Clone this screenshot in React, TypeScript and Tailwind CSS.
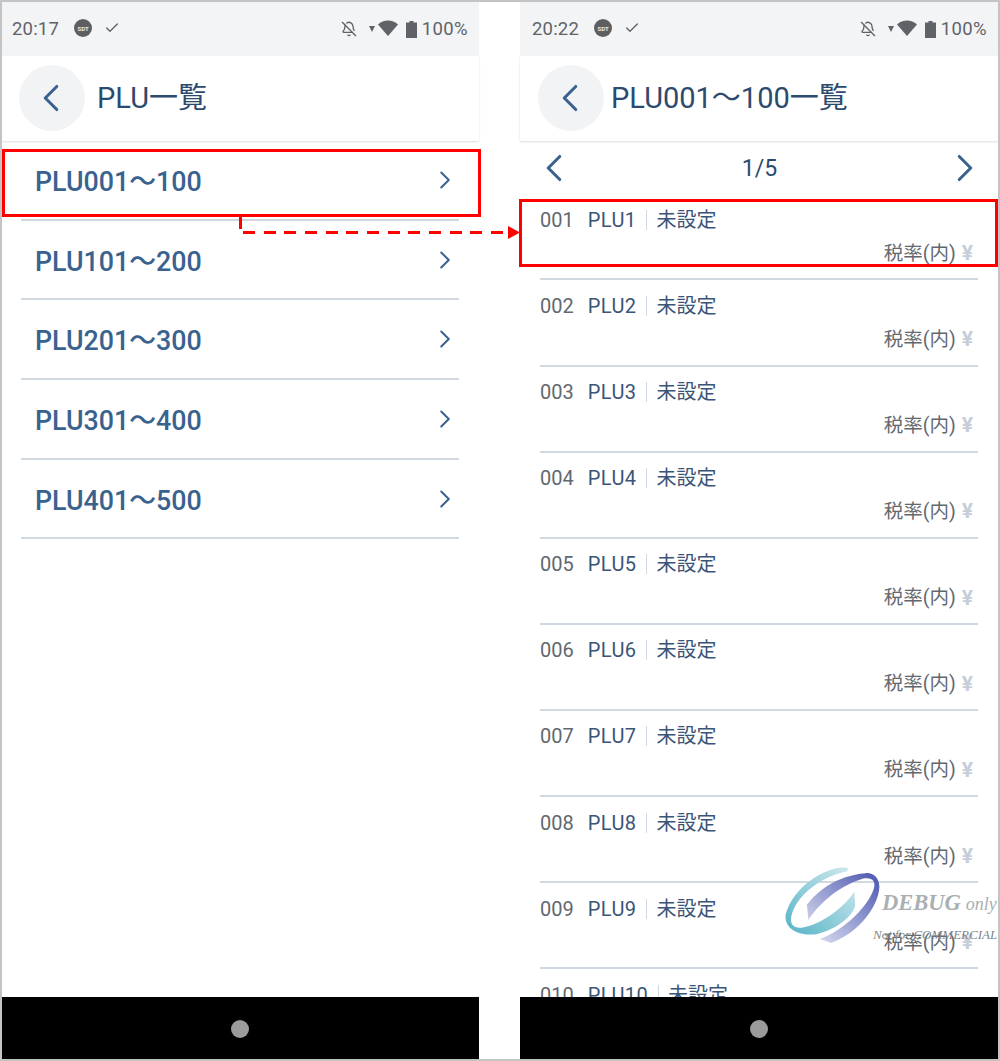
import { BellOff, Check, ChevronLeft, ChevronRight } from "lucide-react";

const FONT = "font-['Roboto','Noto_Sans_CJK_JP',sans-serif]";

function StatusBar({ time, pad }: { time: string; pad: string }) {
  return (
    <div className={`h-[54px] shrink-0 bg-[#f3f4f6] flex items-center pr-[11px] text-[#5f6368] ${pad}`}>
      <span className="text-[18.5px] leading-none tracking-[0.2px]">{time}</span>
      <span className="ml-[15px] w-[18px] h-[18px] rounded-full bg-[#5f5f5f] text-[#e8e8e8] text-[6px] font-bold flex items-center justify-center -mt-[2px]">SDT</span>
      <Check className="ml-[12px] w-[16px] h-[16px] -mt-[2px]" strokeWidth={2} />
      <BellOff className="ml-auto w-[16px] h-[16px]" strokeWidth={2} />
      <svg className="ml-[12px] w-[6px] h-[6px]" viewBox="0 0 6 6"><path d="M0 0h6L3 6z" fill="#5f6368" /></svg>
      <svg className="ml-[3px] w-[20px] h-[16px] -mt-[2px]" viewBox="0 0 20 16"><path d="M0 4.500C5.500 -1 14.500 -1 20 4.500L10 16z" fill="#5f6368" /></svg>
      <svg className="ml-[8px] w-[11px] h-[17px]" viewBox="0 0 11 17"><path d="M3.500 0h4v1.500H11V17H0V1.500h3.500z" fill="#5f6368" /></svg>
      <span className="ml-[5px] text-[18.5px] leading-none tracking-[0.4px]">100%</span>
    </div>
  );
}

function Header({ title, gap, left }: { title: string; gap: string; left: string }) {
  return (
    <div className={`h-[85px] shrink-0 flex items-center pb-[1px] shadow-[0_1px_2px_rgba(0,0,0,0.14)] ${left} ${gap}`}>
      <div className="w-[66px] h-[66px] rounded-full bg-[#f1f3f5] flex items-center justify-center">
        <ChevronLeft className="w-[46px] h-[46px] text-[#3a628f] -ml-[2px]" strokeWidth={1.6} />
      </div>
      <span className="text-[29px] leading-none text-[#2c4a6e] pt-[1px]">{title}</span>
    </div>
  );
}

function NavBar({ shift }: { shift: string }) {
  return (
    <div className={`h-[62px] shrink-0 bg-black flex items-center justify-center pt-[2px] ${shift}`}>
      <div className="w-[18px] h-[18px] rounded-full bg-[#9b9b9b]" />
    </div>
  );
}

const ranges = ["PLU001〜100", "PLU101〜200", "PLU201〜300", "PLU301〜400", "PLU401〜500"];
const items = Array.from({ length: 10 }, (_, i) => i + 1);

export default function App() {
  return (
    <div className={`relative w-[1000px] h-[1061px] border-2 border-[#c4c4c4] bg-white flex overflow-hidden ${FONT}`}>
      <div className="w-[477px] flex flex-col">
        <StatusBar time="20:17" pad="pl-[10px]" />
        <Header title="PLU一覧" gap="gap-[12px]" left="pl-[17px]" />
        <div className="flex-1 overflow-hidden pl-[19px] pr-[20px]">
          {ranges.map((r) => (
            <div key={r} className="flex items-center justify-between border-b-2 border-[#d0d8e2] pl-[14px] h-[79.7px]">
              <span className="text-[26.8px] font-medium leading-none text-[#3a628f] pt-[5px]">{r}</span>
              <ChevronRight className="w-[30px] h-[30px] text-[#3a628f] mr-[-1px]" strokeWidth={1.6} />
            </div>
          ))}
        </div>
        <NavBar shift="pr-[2px]" />
      </div>

      <div className="w-[478px] ml-[41px] flex flex-col">
        <StatusBar time="20:22" pad="pl-[12px]" />
        <Header title="PLU001〜100一覧" gap="gap-[7px]" left="pl-[18px]" />
        <div className="h-[53.4px] shrink-0 flex items-center justify-between pl-[11px] pr-[10px]">
          <ChevronLeft className="w-[46px] h-[46px] text-[#3a628f]" strokeWidth={1.6} />
          <span className="text-[23px] leading-none text-[#2c4a6e] pt-[2px]">1/5</span>
          <ChevronRight className="w-[46px] h-[46px] text-[#3a628f]" strokeWidth={1.6} />
        </div>
        <div className="flex-1 overflow-hidden px-[20px]">
          {items.map((n) => (
            <div key={n} className="h-[86.1px] shrink-0 border-b-2 border-[#d0d8e2] flex flex-col pt-[8.500px]">
              <div className="flex items-center h-[34px] text-[20px] leading-none">
                <span className="text-[#62686f]">{String(n).padStart(3, "0")}</span>
                <span className="ml-[14px] text-[#3a5578] tracking-[0.4px]">PLU{n}</span>
                <span className="ml-[10px] w-[1px] h-[20px] bg-[#d0d8e2]" />
                <span className="ml-[9px] text-[#3a5578]">未設定</span>
              </div>
              <div className="flex justify-end items-center h-[33.5px] text-[19.5px] leading-none pr-[5px]">
                <span className="text-[#62686f]">税率(内)</span>
                <span className="ml-[6px] text-[#c5ced9] font-bold text-[21px]">¥</span>
              </div>
            </div>
          ))}
        </div>
        <NavBar shift="" />
      </div>

      {/* annotation overlay */}
      <div className="absolute left-0 top-[147px] w-[479px] h-[68px] border-[3px] border-[#ff0000]" />
      <div className="absolute left-[517px] top-[197px] w-[479px] h-[68px] border-[3px] border-[#ff0000]" />
      <div className="absolute left-[237px] top-[214px] w-[3px] h-[13px] bg-[#ff0000]" />
      <div className="absolute left-[241px] top-[229px] w-[266px] h-[3px] bg-[repeating-linear-gradient(90deg,#ff0000_0_12px,transparent_12px_20.67px)]" />
      <svg className="absolute left-[506px] top-[224px] w-[12px] h-[13px]" viewBox="0 0 12 13"><path d="M0 0L12 6.500L0 13z" fill="#ff0000" /></svg>

      {/* watermark */}
      <svg className="absolute left-[781px] top-[862px] w-[100px] h-[80px]" viewBox="70 40 300 245">
        <defs>
          <linearGradient id="teal" x1="1" y1="0" x2="0" y2="1">
            <stop offset="0" stopColor="#d5ebf0" />
            <stop offset="1" stopColor="#55b3c6" />
          </linearGradient>
          <linearGradient id="blue" x1="0" y1="1" x2="1" y2="0">
            <stop offset="0" stopColor="#e3e6f5" />
            <stop offset="1" stopColor="#4a55ae" />
          </linearGradient>
        </defs>
        <path d="M265 52C215 40 100 100 75 195C70 240 115 262 170 255C235 240 285 195 288 165L285 125C260 165 190 225 125 235C95 238 85 220 95 190C115 130 190 75 265 62Z" fill="url(#teal)" />
        <path d="M140 165L145 212C170 170 230 110 310 85C340 80 352 92 345 115C330 165 260 240 180 270L215 282C300 250 360 170 362 110C362 80 340 65 320 68C230 75 170 125 140 165Z" fill="url(#blue)" />
      </svg>
      <div className="absolute left-[880px] top-[890px] font-['Liberation_Serif',serif] italic text-[#a9b0b3] leading-none whitespace-nowrap">
        <span className="text-[22.5px] font-bold">DEBUG</span>
        <span className="text-[18px] ml-[5px]">only</span>
      </div>
      <div className="absolute left-[871px] top-[926px] font-['Liberation_Serif',serif] italic text-[#7f8689] text-[13px] leading-none whitespace-nowrap">Not for COMMERCIAL</div>
    </div>
  );
}
